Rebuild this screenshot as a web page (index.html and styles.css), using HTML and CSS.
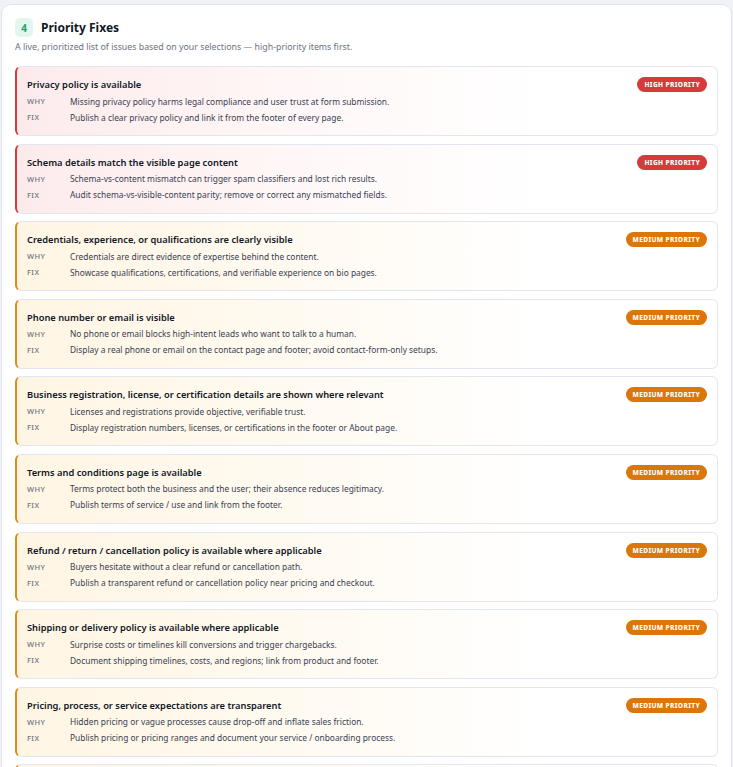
FILE: index.html
```html
<!DOCTYPE html>
<html lang="en">
<head>
<meta charset="utf-8">
<title>Priority Fixes</title>
<link rel="stylesheet" href="styles.css">
</head>
<body>
<section class="panel">
  <header class="panel-head">
    <span class="step">4</span>
    <h2 class="panel-title">Priority Fixes</h2>
  </header>
  <p class="panel-sub">A live, prioritized list of issues based on your selections — high-priority items first.</p>
  <div class="list">
    <article class="fix high">
      <div class="fix-head"><h3 class="fix-title">Privacy policy is available</h3><span class="badge">High priority</span></div>
      <div class="row"><span class="lbl">Why</span><span class="txt">Missing privacy policy harms legal compliance and user trust at form submission.</span></div>
      <div class="row"><span class="lbl">Fix</span><span class="txt">Publish a clear privacy policy and link it from the footer of every page.</span></div>
    </article>
    <article class="fix high">
      <div class="fix-head"><h3 class="fix-title">Schema details match the visible page content</h3><span class="badge">High priority</span></div>
      <div class="row"><span class="lbl">Why</span><span class="txt">Schema-vs-content mismatch can trigger spam classifiers and lost rich results.</span></div>
      <div class="row"><span class="lbl">Fix</span><span class="txt">Audit schema-vs-visible-content parity; remove or correct any mismatched fields.</span></div>
    </article>
    <article class="fix medium">
      <div class="fix-head"><h3 class="fix-title">Credentials, experience, or qualifications are clearly visible</h3><span class="badge">Medium priority</span></div>
      <div class="row"><span class="lbl">Why</span><span class="txt">Credentials are direct evidence of expertise behind the content.</span></div>
      <div class="row"><span class="lbl">Fix</span><span class="txt">Showcase qualifications, certifications, and verifiable experience on bio pages.</span></div>
    </article>
    <article class="fix medium">
      <div class="fix-head"><h3 class="fix-title">Phone number or email is visible</h3><span class="badge">Medium priority</span></div>
      <div class="row"><span class="lbl">Why</span><span class="txt">No phone or email blocks high-intent leads who want to talk to a human.</span></div>
      <div class="row"><span class="lbl">Fix</span><span class="txt">Display a real phone or email on the contact page and footer; avoid contact-form-only setups.</span></div>
    </article>
    <article class="fix medium">
      <div class="fix-head"><h3 class="fix-title">Business registration, license, or certification details are shown where relevant</h3><span class="badge">Medium priority</span></div>
      <div class="row"><span class="lbl">Why</span><span class="txt">Licenses and registrations provide objective, verifiable trust.</span></div>
      <div class="row"><span class="lbl">Fix</span><span class="txt">Display registration numbers, licenses, or certifications in the footer or About page.</span></div>
    </article>
    <article class="fix medium">
      <div class="fix-head"><h3 class="fix-title">Terms and conditions page is available</h3><span class="badge">Medium priority</span></div>
      <div class="row"><span class="lbl">Why</span><span class="txt">Terms protect both the business and the user; their absence reduces legitimacy.</span></div>
      <div class="row"><span class="lbl">Fix</span><span class="txt">Publish terms of service / use and link from the footer.</span></div>
    </article>
    <article class="fix medium">
      <div class="fix-head"><h3 class="fix-title">Refund / return / cancellation policy is available where applicable</h3><span class="badge">Medium priority</span></div>
      <div class="row"><span class="lbl">Why</span><span class="txt">Buyers hesitate without a clear refund or cancellation path.</span></div>
      <div class="row"><span class="lbl">Fix</span><span class="txt">Publish a transparent refund or cancellation policy near pricing and checkout.</span></div>
    </article>
    <article class="fix medium">
      <div class="fix-head"><h3 class="fix-title">Shipping or delivery policy is available where applicable</h3><span class="badge">Medium priority</span></div>
      <div class="row"><span class="lbl">Why</span><span class="txt">Surprise costs or timelines kill conversions and trigger chargebacks.</span></div>
      <div class="row"><span class="lbl">Fix</span><span class="txt">Document shipping timelines, costs, and regions; link from product and footer.</span></div>
    </article>
    <article class="fix medium">
      <div class="fix-head"><h3 class="fix-title">Pricing, process, or service expectations are transparent</h3><span class="badge">Medium priority</span></div>
      <div class="row"><span class="lbl">Why</span><span class="txt">Hidden pricing or vague processes cause drop-off and inflate sales friction.</span></div>
      <div class="row"><span class="lbl">Fix</span><span class="txt">Publish pricing or pricing ranges and document your service / onboarding process.</span></div>
    </article>
    <article class="fix medium fix-peek" aria-hidden="true"></article>
  </div>
</section>
</body>
</html>
```

FILE: styles.css
```css
* { box-sizing: border-box; }
html, body { margin: 0; }
body {
  background: #f1f2f7;
  padding: 4px 1px 0 1px;
  font-family: "Noto Sans", "Open Sans", sans-serif;
  color: #1f2937;
  overflow: hidden;
  height: 767px;
}
.panel {
  background: #fff;
  border: 1px solid #e1e4ec;
  border-radius: 10px;
  padding: 13px 13px 20px 13px;
}
.panel-head {
  display: flex;
  align-items: center;
  gap: 8px;
  height: 19px;
}
.step {
  width: 18px;
  height: 19px;
  border-radius: 5px;
  background: #e3f6ee;
  color: #1f9d6b;
  font-size: 10px;
  font-weight: 700;
  display: flex;
  align-items: center;
  justify-content: center;
}
.panel-title {
  margin: 0;
  font-size: 12px;
  font-weight: 700;
  color: #111827;
}
.panel-sub {
  margin: 4px 0 0 0;
  font-size: 8.8px;
  line-height: 12px;
  color: #6b7280;
}
.list {
  margin-top: 13px;
  display: flex;
  flex-direction: column;
  gap: 7.6px;
}
.fix {
  border: 1px solid #e3e6ee;
  border-left: 2px solid #d63a3a;
  border-radius: 6px;
  padding: 9px 10px 10px 10px;
  background: linear-gradient(90deg, #fdebec 0%, #fff7f7 40%, #ffffff 75%);
}
.fix.medium {
  border-left-color: #e08a1a;
  background: linear-gradient(90deg, #fff5e3 0%, #fffaf1 40%, #ffffff 75%);
}
.fix-peek { height: 40px; }
.fix-head {
  display: flex;
  align-items: center;
  justify-content: space-between;
  height: 17px;
}
.fix-title {
  margin: 0;
  font-size: 9.3px;
  font-weight: 600;
  color: #111827;
}
.badge {
  background: #d63a3a;
  color: #fff;
  font-size: 6.6px;
  font-weight: 800;
  text-transform: uppercase;
  letter-spacing: 0.35px;
  line-height: 15px;
  height: 15px;
  padding: 0 7px;
  border-radius: 8px;
}
.fix.medium .badge { background: #da760a; }
.row {
  display: flex;
  height: 16px;
  align-items: center;
  font-size: 8.4px;
}
.lbl {
  width: 43px;
  flex: none;
  font-size: 7.5px;
  font-weight: 500;
  text-transform: uppercase;
  letter-spacing: 0.4px;
  color: #6b7280;
}
.txt { color: #374151; }
```
